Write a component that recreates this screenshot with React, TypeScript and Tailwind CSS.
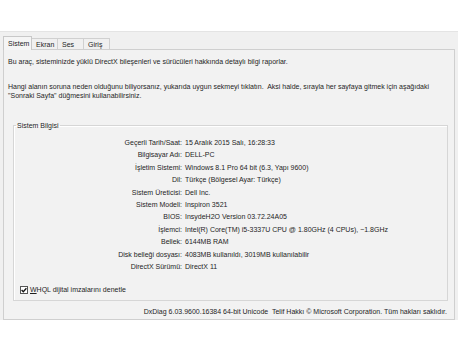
const rows: [string, string][] = [
  ["Geçerli Tarih/Saat:", "15 Aralık 2015 Salı, 16:28:33"],
  ["Bilgisayar Adı:", "DELL-PC"],
  ["İşletim Sistemi:", "Windows 8.1 Pro 64 bit (6.3, Yapı 9600)"],
  ["Dil:", "Türkçe (Bölgesel Ayar: Türkçe)"],
  ["Sistem Üreticisi:", "Dell Inc."],
  ["Sistem Modeli:", "Inspiron 3521"],
  ["BIOS:", "InsydeH2O Version 03.72.24A05"],
  ["İşlemci:", "Intel(R) Core(TM) i5-3337U CPU @ 1.80GHz (4 CPUs), ~1.8GHz"],
  ["Bellek:", "6144MB RAM"],
  ["Disk belleği dosyası:", "4083MB kullanıldı, 3019MB kullanılabilir"],
  ["DirectX Sürümü:", "DirectX 11"],
];

const tabs = [
  { label: "Sistem", w: "w-[29px]" },
  { label: "Ekran", w: "w-[26px]" },
  { label: "Ses", w: "w-[26px]" },
  { label: "Giriş", w: "w-[26px]" },
];

export default function App() {
  return (
    <div className="w-[458px] h-[354px] bg-white text-[7px] text-[#1e1e1e] font-['Liberation_Sans',Arial,sans-serif] overflow-hidden">
      <div className="h-[31px] bg-white" />
      <div className="h-[289px] bg-[#f0f0f0] border-t border-[#e4e4e4] px-[3px] pt-[4px] flex flex-col">
        {/* tabs */}
        <div className="flex items-end h-[13px]">
          {tabs.map((t, i) =>
            i === 0 ? (
              <div
                key={t.label}
                className={`${t.w} h-[14px] -mb-px relative z-10 bg-[#f5f5f5] border border-b-0 border-[#c8c8c8] pl-[4px] leading-[13px]`}
              >
                {t.label}
              </div>
            ) : (
              <div
                key={t.label}
                className={`${t.w} h-[11px] bg-[#f0f0f0] border border-b-0 border-l-0 border-[#d0d0d0] pl-[4px] leading-[11px]`}
              >
                {t.label}
              </div>
            )
          )}
        </div>

        {/* panel */}
        <div className="h-[271px] border border-[#cfcfcf] bg-[#f2f2f2] flex flex-col">
          <p className="mt-[7px] ml-[4px] leading-[9px]">
            Bu araç, sisteminizde yüklü DirectX bileşenleri ve sürücüleri hakkında detaylı bilgi raporlar.
          </p>
          <p className="mt-[16px] ml-[4px] leading-[9px]">
            Hangi alanın soruna neden olduğunu biliyorsanız, yukarıda uygun sekmeyi tıklatın.&nbsp; Aksi halde, sırayla her sayfaya gitmek için aşağıdaki
            <br />
            "Sonraki Sayfa" düğmesini kullanabilirsiniz.
          </p>

          <fieldset className="mt-[21px] ml-[9px] mr-[6px] border border-[#d6d6d6] shadow-[inset_1px_1px_0_#fff] pb-[4px]">
            <legend className="ml-[2px] px-[1px] leading-[9px]">Sistem Bilgisi</legend>
            <div className="mt-[7px] flex flex-col">
              {rows.map(([k, v]) => (
                <div key={k} className="flex h-[12.4px] leading-[12.4px] whitespace-nowrap">
                  <span className="w-[168px] text-right">{k}</span>
                  <span className="ml-[3px]">{v}</span>
                </div>
              ))}
            </div>
            <div className="mt-[11px] ml-[6px] flex items-center gap-[2px] h-[12px]">
              <span className="w-[8px] h-[8px] bg-white border border-[#555] flex items-center justify-center">
                <svg width="6" height="6" viewBox="0 0 6 6">
                  <path d="M0.6 3 L2.3 4.7 L5.4 1.2" fill="none" stroke="#111" strokeWidth="1.3" />
                </svg>
              </span>
              <span>
                <span className="underline">W</span>HQL dijital imzalarını denetle
              </span>
            </div>
          </fieldset>

          <p className="mt-[6px] mr-[7px] text-right leading-[9px] whitespace-nowrap">
            DxDiag 6.03.9600.16384 64-bit Unicode&nbsp; Telif Hakkı © Microsoft Corporation. Tüm hakları saklıdır.
          </p>
        </div>
      </div>
    </div>
  );
}
